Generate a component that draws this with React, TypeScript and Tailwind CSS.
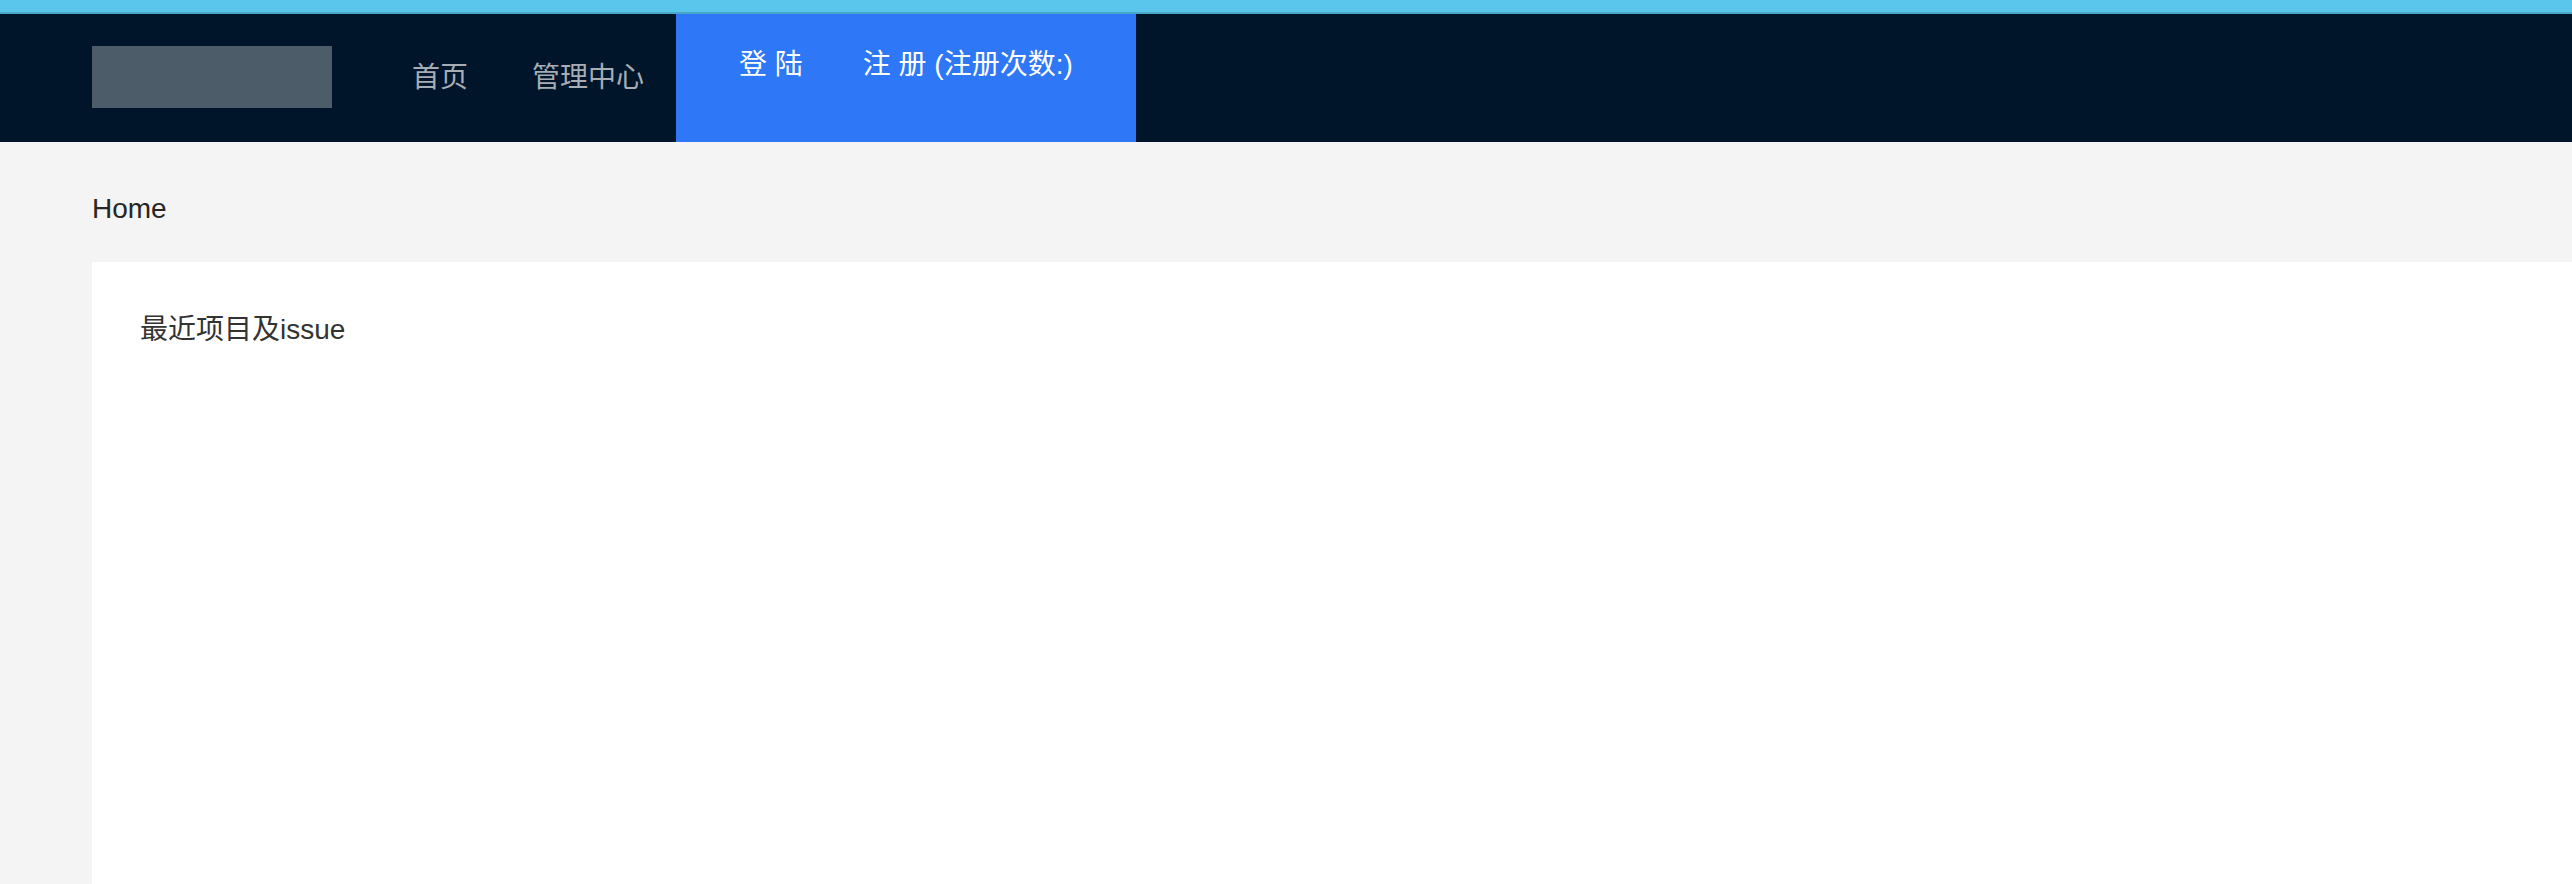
import React from 'react';

const font = { fontFamily: '"Liberation Sans", "Noto Sans CJK SC", sans-serif' };

export default function App() {
    const navItems = ['首页', '管理中心'];

    return (
        <div className="min-h-[884px] bg-[#f4f4f4] text-[28px]" style={font}>
            <div className="h-[12px] bg-[#5bc6eb]" />
            <div className="h-[2px] bg-[#48a6c8]" />

            <header className="flex h-[128px] bg-[#001529] pl-[92px]">
                <div className="mt-[32px] mr-[48px] h-[62px] w-[240px] bg-[#4c5c68]" />
                <nav className="flex">
                    {navItems.map((item) => (
                        <a key={item} className="flex items-center px-[32px] leading-[44px] text-[#a6adb4]">
                            {item}
                        </a>
                    ))}
                </nav>
                <div className="flex h-full items-start gap-[60px] bg-[#2e77f6] px-[63px] pt-[29px] leading-[44px] text-white">
                    <span>登 陆</span>
                    <span>注 册 (注册次数:)</span>
                </div>
            </header>

            <main className="pl-[92px]">
                <div className="flex h-[120px] items-center pt-[14px] leading-[44px] text-[#262626]">Home</div>
                <section className="min-h-[622px] bg-white p-[48px] pt-[46px]">
                    <p className="leading-[44px] text-[#333333]">最近项目及issue</p>
                </section>
            </main>
        </div>
    );
}
